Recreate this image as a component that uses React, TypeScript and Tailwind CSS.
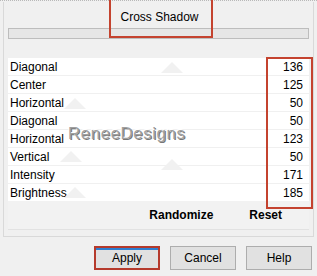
import { FC } from "react";

const rows: { label: string; value: number }[] = [
  { label: "Diagonal", value: 136 },
  { label: "Center", value: 125 },
  { label: "Horizontal", value: 50 },
  { label: "Diagonal", value: 50 },
  { label: "Horizontal", value: 123 },
  { label: "Vertical", value: 50 },
  { label: "Intensity", value: 171 },
  { label: "Brightness", value: 185 },
];

const Caret: FC<{ className: string }> = ({ className }) => (
  <svg
    className={`pointer-events-none absolute ${className}`}
    width="22"
    height="12"
    viewBox="0 0 22 12"
  >
    <path d="M0 12 L11 1 L22 12 Z" fill="#f1f1f1" />
  </svg>
);

const Button: FC<{ label: string; active?: boolean }> = ({ label, active }) => (
  <button
    className={`flex h-[24px] w-[66px] items-center justify-center bg-[#e1e1e1] text-[12px] text-black ${
      active
        ? "border-2 border-[#b53a2c] shadow-[inset_0_2px_0_#2f7fd0]"
        : "border border-[#adadad]"
    }`}
  >
    {label}
  </button>
);

export default function App() {
  return (
    <div className="relative h-[276px] w-[317px] overflow-hidden bg-[#f0f0f0] font-['Liberation_Sans',Arial,sans-serif] text-black">
      <div className="h-[2px] border-t border-dotted border-[#b8b8b8]" />
      <div className="mx-[3px] flex h-[235px] flex-col border-x border-b border-[#d9d9d9] px-[4px] pb-[6px]">
        <div className="flex h-[24px] items-end justify-center pl-[2px] text-[12px]">
          Cross Shadow
        </div>
        <div className="mt-[2px] h-[11px] border border-[#bdbdbd] bg-[#e6e6e6]" />
        <div className="relative mt-[19px] flex flex-1 flex-col border-b border-[#e2e2e2] bg-[#f2f2f2]">
          <div className="flex flex-col gap-[1px] bg-[#f0f0f0]">
            {rows.map((row, i) => (
              <div
                key={i}
                className="flex h-[17px] items-center justify-between bg-white pl-[2px] pr-[6px] text-[12px]"
              >
                <span>{row.label}</span>
                <span>{row.value}</span>
              </div>
            ))}
          </div>
          <Caret className="left-[153px] top-[3px]" />
          <Caret className="left-[56px] top-[39px]" />
          <Caret className="left-[52px] top-[92px]" />
          <Caret className="left-[153px] top-[100px]" />
          <Caret className="left-[56px] top-[128px]" />
          <div className="flex flex-1 items-center justify-end gap-[36px] pr-[27px] text-[12px] font-bold">
            <span>Randomize</span>
            <span>Reset</span>
          </div>
        </div>
      </div>
      <div className="mt-[9px] flex justify-end gap-[10px] pr-[5px]">
        <Button label="Apply" active />
        <Button label="Cancel" />
        <Button label="Help" />
      </div>

      <div className="pointer-events-none absolute left-[68px] top-[121px] text-[17px] tracking-[0.5px] text-[#a0a0a0] [text-shadow:-1px_-1px_0_#ffffff,1px_1px_0_#777777]">
        ReneeDesigns
      </div>
      <div className="pointer-events-none absolute left-[109px] top-[-3px] h-[41px] w-[104px] border-2 border-[#c4432f]" />
      <div className="pointer-events-none absolute left-[266px] top-[57px] h-[152px] w-[47px] border-2 border-[#c4432f]" />
    </div>
  );
}
